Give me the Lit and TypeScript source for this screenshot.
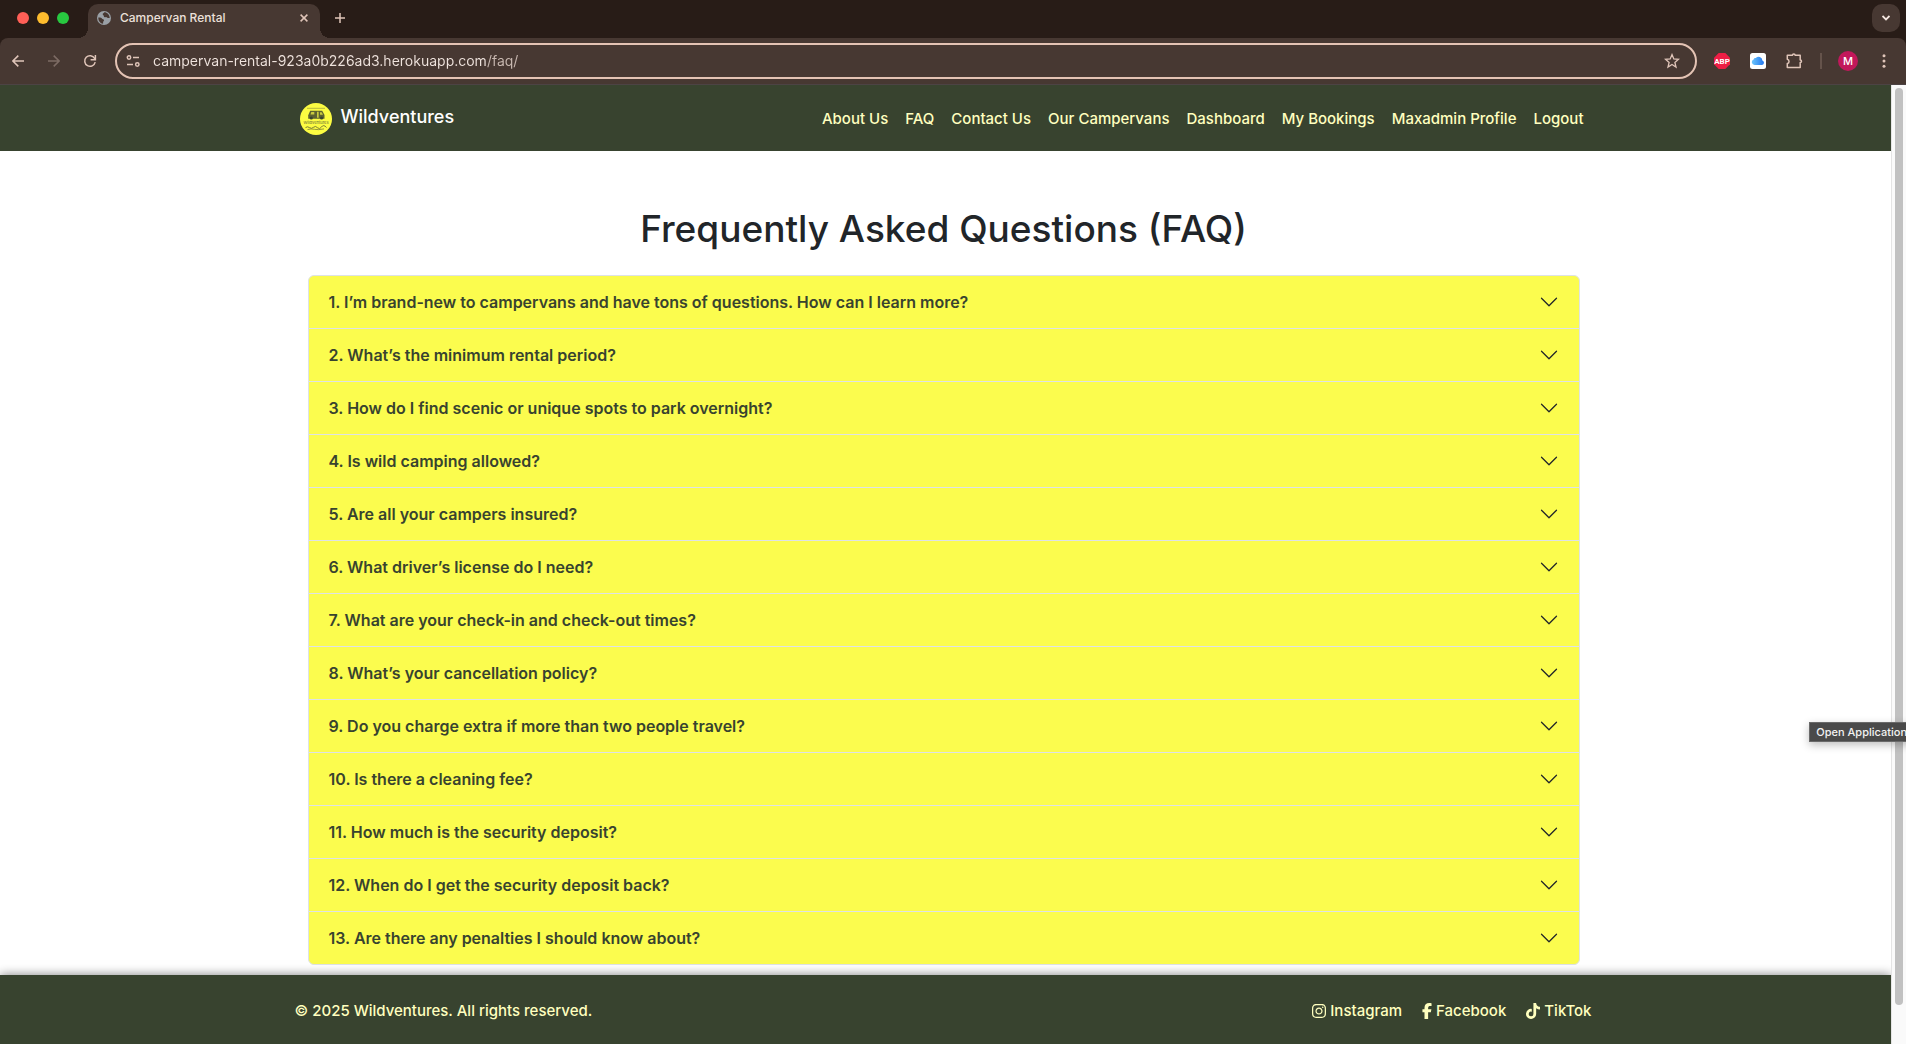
import { LitElement, html, css, svg } from "lit";
import { customElement, state } from "lit/decorators.js";

const NAV_LINKS = [
  "About Us",
  "FAQ",
  "Contact Us",
  "Our Campervans",
  "Dashboard",
  "My Bookings",
  "Maxadmin Profile",
  "Logout",
];

const QUESTIONS = [
  "1. I’m brand-new to campervans and have tons of questions. How can I learn more?",
  "2. What’s the minimum rental period?",
  "3. How do I find scenic or unique spots to park overnight?",
  "4. Is wild camping allowed?",
  "5. Are all your campers insured?",
  "6. What driver’s license do I need?",
  "7. What are your check-in and check-out times?",
  "8. What’s your cancellation policy?",
  "9. Do you charge extra if more than two people travel?",
  "10. Is there a cleaning fee?",
  "11. How much is the security deposit?",
  "12. When do I get the security deposit back?",
  "13. Are there any penalties I should know about?",
];

const SOCIAL = [
  {
    name: "Instagram",
    width: 14,
    box: "0 0 448 512",
    path: svg`<path d="M224.100 141c-63.600 0-114.900 51.300-114.900 114.900s51.300 114.900 114.900 114.900S339 319.500 339 255.900 287.700 141 224.100 141zm0 189.600c-41.100 0-74.700-33.500-74.700-74.700s33.500-74.700 74.700-74.700 74.700 33.500 74.700 74.700-33.600 74.700-74.700 74.700zm146.400-194.300c0 14.900-12 26.800-26.800 26.800-14.900 0-26.800-12-26.800-26.800s12-26.800 26.800-26.800 26.800 12 26.800 26.800zm76.100 27.200c-1.700-35.900-9.900-67.700-36.200-93.900-26.200-26.200-58-34.400-93.900-36.200-37-2.100-147.900-2.100-184.900 0-35.800 1.700-67.600 9.900-93.900 36.100s-34.400 58-36.200 93.900c-2.100 37-2.100 147.900 0 184.900 1.700 35.900 9.900 67.700 36.200 93.900s58 34.400 93.900 36.200c37 2.100 147.900 2.100 184.900 0 35.900-1.700 67.700-9.900 93.900-36.200 26.200-26.200 34.400-58 36.200-93.900 2.100-37 2.100-147.800 0-184.800zM398.800 388c-7.800 19.600-22.900 34.700-42.600 42.600-29.500 11.700-99.500 9-132.100 9s-102.700 2.600-132.100-9c-19.600-7.800-34.700-22.900-42.600-42.600-11.700-29.500-9-99.500-9-132.100s-2.600-102.700 9-132.100c7.800-19.600 22.900-34.700 42.600-42.600 29.500-11.700 99.500-9 132.100-9s102.700-2.600 132.100 9c19.600 7.800 34.700 22.900 42.600 42.600 11.700 29.500 9 99.500 9 132.100s2.700 102.700-9 132.100z"/>`,
  },
  {
    name: "Facebook",
    width: 10,
    box: "0 0 320 512",
    path: svg`<path d="M80 299.300V512H196V299.300h86.500l18-97.800H196V166.900c0-51.700 20.300-71.500 72.700-71.500c16.300 0 29.400 .4 37 1.200V7.900C291.400 4 256.400 0 236.200 0C129.300 0 80 50.500 80 159.400v42.100H14v97.800H80z"/>`,
  },
  {
    name: "TikTok",
    width: 14,
    box: "0 0 448 512",
    path: svg`<path d="M448 209.900a210.100 210.100 0 0 1 -122.800-39.300V349.400A162.600 162.600 0 1 1 185 188.300V278.200a74.600 74.600 0 1 0 52.200 71.200V0l88 0a121.200 121.200 0 0 0 1.900 22.200h0A122.200 122.200 0 0 0 381 102.400a121.400 121.400 0 0 0 67 20.100z"/>`,
  },
];

@customElement("browser-bar")
export class BrowserBar extends LitElement {
  @state() private address = "campervan-rental-923a0b226ad3.herokuapp.com/faq/";

  static styles = css`
    :host {
      display: block;
      background: #281c17;
      color: #ece0da;
      font-family: Inter, "Liberation Sans", sans-serif;
    }
    button {
      display: flex;
      align-items: center;
      justify-content: center;
      flex: none;
      margin: 0;
      padding: 0;
      border: 0;
      background: none;
      color: #e0c5b9;
      font: inherit;
    }
    svg {
      display: block;
    }
    .strip {
      display: flex;
      align-items: flex-start;
      height: 34px;
      padding: 4px 6px 0 17px;
    }
    .lights {
      display: flex;
      gap: 8px;
      padding: 8px 20px 0 0;
    }
    .light {
      width: 12px;
      height: 12px;
      border-radius: 50%;
    }
    .red { background: #ff5f57; }
    .amber { background: #febc2e; }
    .green { background: #28c840; }
    .tab {
      position: relative;
      display: flex;
      align-items: center;
      box-sizing: border-box;
      width: 232px;
      height: 34px;
      padding: 0 8px 6px 9px;
      margin-left: -1px;
      border-radius: 10px 10px 0 0;
      background: #473832;
    }
    .tab::before,
    .tab::after {
      content: "";
      position: absolute;
      bottom: 0;
      width: 10px;
      height: 10px;
    }
    .tab::before {
      left: -10px;
      background: radial-gradient(circle at 0 0, transparent 10px, #473832 10px);
    }
    .tab::after {
      right: -10px;
      background: radial-gradient(circle at 100% 0, transparent 10px, #473832 10px);
    }
    .title {
      flex: 1;
      margin-left: 9px;
      font-size: 12px;
      line-height: 16px;
    }
    .close {
      width: 16px;
      height: 16px;
    }
    .new {
      width: 28px;
      height: 28px;
      margin-left: 6px;
    }
    .search {
      width: 28px;
      height: 28px;
      margin-left: auto;
      border-radius: 10px;
      background: #473832;
      color: #f5e8e2;
    }
    .tools {
      display: flex;
      align-items: center;
      height: 46px;
      padding: 0 12px 0 8px;
      border-bottom: 1px solid #4c4344;
      border-radius: 8px 8px 0 0;
      background: #473832;
    }
    .back,
    .forward,
    .reload {
      width: 20px;
      height: 20px;
      margin-right: 16px;
    }
    .forward {
      color: #7d6b64;
    }
    .omnibox {
      display: flex;
      flex: 1;
      align-items: center;
      box-sizing: border-box;
      height: 36px;
      margin: 0 15px 0 -1px;
      padding: 0 15px 0 8px;
      border: 2px solid #e4c3b4;
      border-radius: 18px;
    }
    .address {
      flex: 1;
      min-width: 0;
      height: 24px;
      margin: 0 0 0 12px;
      padding: 0;
      border: 0;
      outline: 0;
      background: linear-gradient(90deg, #f0e4de 333px, #c9b9b1 333px);
      background-clip: text;
      -webkit-background-clip: text;
      -webkit-text-fill-color: transparent;
      font: 14px/24px Inter, "Liberation Sans", sans-serif;
    }
    .extensions {
      display: flex;
      align-items: center;
      gap: 16px;
    }
    .extensions button {
      width: 20px;
      height: 20px;
    }
    .rule {
      width: 2px;
      height: 16px;
      background: #65534b;
    }
    .extensions .avatar {
      border-radius: 50%;
      background: #c2185b;
      color: #fff;
      font-size: 11px;
    }
  `;

  render() {
    return html`
      <div class="strip">
        <div class="lights">
          <span class="light red"></span><span class="light amber"></span><span class="light green"></span>
        </div>
        <div class="tab">
          <svg width="14" height="14" viewBox="0 0 14 14">
            <circle cx="7" cy="7" r="7" fill="#9aa0a6" />
            <path d="M1.300 6.500c1.700-.2 3 .1 3.600 1 .5.900 1.800.4 2.100 1.500.2 1-.9 1.300-.9 2.200v1.600C3.200 12.500 1.300 10 1.300 6.500zM7.300 1.300c-.2 1-1.600.8-1.600 1.900 0 1 1.200.9 1.200 2 0 .9 1.100 1.200 2 .8.8-.4 1 .9 2 .9.7 0 1.200.2 1.800.2C12.600 3.700 10.300 1.300 7.300 1.300z" fill="#473832" />
          </svg>
          <span class="title">Campervan Rental</span>
          <button class="close" aria-label="Close tab">
            <svg width="8" height="8" viewBox="0 0 8 8" fill="none" stroke="currentColor" stroke-width="1.500"><path d="M.6.6l6.800 6.800M7.400.6L.6 7.400" /></svg>
          </button>
        </div>
        <button class="new" aria-label="New tab">
          <svg width="10" height="10" viewBox="0 0 10 10" fill="none" stroke="currentColor" stroke-width="1.500"><path d="M5 0v10M0 5h10" /></svg>
        </button>
        <button class="search" aria-label="Search tabs">
          <svg width="8" height="6" viewBox="0 0 8 6" fill="none" stroke="currentColor" stroke-width="1.800"><path d="M.5 1L4 4.500 7.500 1" /></svg>
        </button>
      </div>
      <div class="tools">
        <button class="back" aria-label="Back">
          <svg width="12" height="12" viewBox="0 0 12 12" fill="none" stroke="currentColor" stroke-width="1.500"><path d="M12 6H1M6.300.6L.9 6l5.400 5.400" /></svg>
        </button>
        <button class="forward" aria-label="Forward">
          <svg width="12" height="12" viewBox="0 0 12 12" fill="none" stroke="currentColor" stroke-width="1.500"><path d="M0 6h11M5.700.6L11.100 6l-5.400 5.400" /></svg>
        </button>
        <button class="reload" aria-label="Reload">
          <svg width="14" height="14" viewBox="0 0 14 14" fill="none" stroke="currentColor" stroke-width="1.500"><path d="M12.200 8.200A5.300 5.300 0 1 1 11.600 4.300L12.500 5.600" /><path d="M12.400.9v4.900H7.600" /></svg>
        </button>
        <div class="omnibox">
          <button aria-label="Site information">
            <svg width="16" height="14" viewBox="0 0 16 14" fill="none" stroke="currentColor" stroke-width="1.500"><circle cx="4" cy="3.500" r="1.700" /><path d="M8 3.500h6M2 10.500h6" /><circle cx="12.300" cy="10.500" r="1.700" /></svg>
          </button>
          <input class="address" type="text" aria-label="Address" .value=${this.address} />
          <button aria-label="Bookmark this page">
            <svg width="16" height="16" viewBox="0 0 16 16" fill="none" stroke="currentColor" stroke-width="1.300"><path d="M8 1.600l1.800 4.300 4.700.4-3.600 3.100 1.100 4.600L8 11.500 4 14l1.100-4.600L1.500 6.300l4.700-.4z" /></svg>
          </button>
        </div>
        <div class="extensions">
          <button aria-label="Ad blocker">
            <svg width="16" height="16" viewBox="0 0 16 16"><path d="M4.700 0h6.600L16 4.700v6.600L11.300 16H4.700L0 11.300V4.700z" fill="#ed1e45" /><text x="8" y="10.800" text-anchor="middle" font-family="Roboto, sans-serif" font-weight="700" font-size="8" fill="#fff">ABP</text></svg>
          </button>
          <button aria-label="Cloud">
            <svg width="16" height="16" viewBox="0 0 16 16">
              <defs><linearGradient id="cloud" x1="0" x2="1"><stop offset="0" stop-color="#6cc5fb" /><stop offset="1" stop-color="#2377f0" /></linearGradient></defs>
              <rect width="16" height="16" rx="2.500" fill="#fff" />
              <path d="M4.600 12a2.900 2.900 0 0 1-1-5.600 1.900 1.900 0 0 1 2.200-1.300 3.800 3.800 0 0 1 6.600 2.300A2.400 2.400 0 0 1 12.100 12z" fill="url(#cloud)" />
            </svg>
          </button>
          <button aria-label="Extensions">
            <svg width="18" height="18" viewBox="0 0 18 18" fill="none" stroke="currentColor" stroke-width="1.500" stroke-linejoin="round"><path d="M2.300 3.200h5.200a1.300 1.300 0 0 1 2.600 0h5.100v4.700a1.300 1.300 0 0 1 0 2.600v4.900H2.300v-3.800a2.200 2.200 0 0 0 0-4.300z" /></svg>
          </button>
          <span class="rule"></span>
          <button class="avatar" aria-label="Profile">M</button>
          <button aria-label="Menu">
            <svg width="4" height="14" viewBox="0 0 4 14" fill="currentColor"><circle cx="2" cy="1.800" r="1.500" /><circle cx="2" cy="7" r="1.500" /><circle cx="2" cy="12.200" r="1.500" /></svg>
          </button>
        </div>
      </div>
    `;
  }
}

@customElement("app-root")
export class AppRoot extends LitElement {
  static styles = css`
    :host {
      position: relative;
      display: flex;
      flex-direction: column;
      min-height: 100vh;
      overflow: hidden;
      background: #fff;
      color: #212529;
      font: 500 15px/24px Inter, "Liberation Sans", sans-serif;
    }
    a {
      color: inherit;
      text-decoration: none;
    }
    svg {
      display: block;
    }
    .view {
      display: flex;
      flex: 1;
    }
    .page {
      display: flex;
      flex: 1;
      flex-direction: column;
      min-width: 0;
      overflow: hidden;
    }
    .container {
      box-sizing: border-box;
      width: 100%;
      max-width: 1320px;
      margin: 0 auto;
    }
    .header {
      background: #38432f;
      color: #ffffbf;
    }
    .header .container {
      display: flex;
      align-items: center;
      justify-content: space-between;
      height: 66px;
      padding: 2px 22px 0 14px;
    }
    .brand {
      display: flex;
      gap: 9px;
      color: #fff;
      font-size: 18px;
      line-height: 28px;
    }
    .links {
      display: flex;
      gap: 17px;
    }
    .main {
      flex: 1;
      padding-bottom: 10px;
    }
    .main .container {
      padding: 0 26px 0 22px;
    }
    .heading {
      margin: 0;
      padding: 54px 0 22px;
      font-size: 37px;
      font-weight: 500;
      line-height: 48px;
      text-align: center;
    }
    .accordion {
      overflow: hidden;
      border: 1px solid #dee2e6;
      border-radius: 6px;
      background: #fbfc4e;
    }
    .item {
      margin: 0;
      font-size: 16px;
    }
    .item + .item {
      border-top: 1px solid #dee2e6;
    }
    .question {
      display: flex;
      align-items: center;
      justify-content: space-between;
      width: 100%;
      margin: 0;
      padding: 14px 20px;
      border: 0;
      background: none;
      color: #38432f;
      font: inherit;
      font-weight: 600;
      line-height: 24px;
      text-align: left;
    }
    .footer {
      background: #38432f;
      box-shadow: 0 0 10px rgba(0, 0, 0, 0.5);
      color: #ffffbf;
    }
    .footer .container {
      display: flex;
      align-items: center;
      justify-content: space-between;
      height: 69px;
      padding: 2px 14px 0 9px;
    }
    .copy {
      margin: 0;
    }
    .social {
      display: flex;
      gap: 20px;
    }
    .social a {
      display: flex;
      align-items: center;
      gap: 4px;
    }
    .track {
      display: flex;
      box-sizing: border-box;
      width: 15px;
      padding: 3px 3px 39px;
      border-left: 1px solid #e4e4e4;
      background: #fafafa;
    }
    .thumb {
      flex: 1;
      border-radius: 4px;
      background: #c1c1c1;
    }
    .tooltip {
      position: absolute;
      top: 722px;
      right: -8px;
      box-sizing: border-box;
      height: 20px;
      padding: 0 6px;
      border: 1px solid #6a6a6a;
      background: #4a4a4a;
      box-shadow: 0 3px 8px rgba(0, 0, 0, 0.25);
      color: #f2f2f2;
      font-size: 11px;
      line-height: 18px;
      white-space: nowrap;
    }
  `;

  private logo() {
    return html`<svg width="32" height="32" viewBox="0 0 32 32" aria-hidden="true">
      <circle cx="16" cy="16" r="16" fill="#fcfc42" />
      <path d="M7 5.300h18" stroke="#a5a63b" stroke-width=".8" />
      <path d="M10.200 7.800h12l2.300 4.300v3.700H8.200v-3.500z" fill="#5d6230" />
      <path d="M11.300 9h3v2.500h-3.800zM17 8.800h1.700v6H17zM20 9.200h1.700l1.300 2.600h-3z" fill="#c9ca3f" />
      <circle cx="11.300" cy="15" r="1.600" fill="#38432f" /><circle cx="21.600" cy="15" r="1.600" fill="#38432f" />
      <text x="16" y="21" text-anchor="middle" font-family="Inter, sans-serif" font-size="4" fill="#7b7e36">Wildventures</text>
      <path d="M5.500 24.600q2-1.600 4 0t4-.3 4 .4 4-.7 5 .5" fill="none" stroke="#6a6e32" stroke-width=".9" />
      <path d="M7.500 26.600q3.500-1.200 7-.3t9.500-.4" fill="none" stroke="#7b7e36" stroke-width=".8" />
    </svg>`;
  }

  render() {
    return html`
      <browser-bar></browser-bar>
      <div class="view">
        <div class="page">
          <header class="header">
            <div class="container">
              <a class="brand" href="#">${this.logo()}Wildventures</a>
              <nav class="links">${NAV_LINKS.map((label) => html`<a href="#">${label}</a>`)}</nav>
            </div>
          </header>
          <main class="main">
            <div class="container">
              <h1 class="heading">Frequently Asked Questions (FAQ)</h1>
              <div class="accordion">
                ${QUESTIONS.map(
                  (question) => html`<h2 class="item">
                    <button class="question" aria-expanded="false">
                      ${question}
                      <svg width="20" height="20" viewBox="0 0 16 16" fill="none" stroke="#212529" stroke-linecap="round" stroke-linejoin="round"><path d="m2 5 6 6 6-6" /></svg>
                    </button>
                  </h2>`
                )}
              </div>
            </div>
          </main>
          <footer class="footer">
            <div class="container">
              <p class="copy">© 2025 Wildventures. All rights reserved.</p>
              <nav class="social">
                ${SOCIAL.map(
                  (site) => html`<a href="#"><svg width=${site.width} height="16" viewBox=${site.box} fill="currentColor">${site.path}</svg>${site.name}</a>`
                )}
              </nav>
            </div>
          </footer>
        </div>
        <div class="track"><div class="thumb"></div></div>
      </div>
      <div class="tooltip" role="tooltip">Open Application</div>
    `;
  }
}
